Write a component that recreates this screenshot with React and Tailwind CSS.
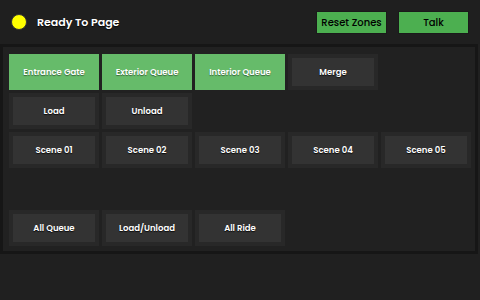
import React from "react";

const green = "bg-[#66bb6a]";

const Cell = ({ label, active }) =>
  active ? (
    <button className={`${green} flex items-center justify-center text-white text-[8.5px] font-semibold [text-shadow:0_1px_1px_rgba(0,0,0,0.45)]`}>
      {label}
    </button>
  ) : (
    <div className="bg-[#282828] p-[4px] flex">
      <button className="flex-1 bg-[#333333] flex items-center justify-center text-white text-[8.5px] font-semibold [text-shadow:0_1px_1px_rgba(0,0,0,0.8)]">
        {label}
      </button>
    </div>
  );

const App = () => {
  const rows = [
    [
      { label: "Entrance Gate", active: true },
      { label: "Exterior Queue", active: true },
      { label: "Interior Queue", active: true },
      { label: "Merge" },
      null,
    ],
    [{ label: "Load" }, { label: "Unload" }, null, null, null],
    [
      { label: "Scene 01" },
      { label: "Scene 02" },
      { label: "Scene 03" },
      { label: "Scene 04" },
      { label: "Scene 05" },
    ],
    [null, null, null, null, null],
    [{ label: "All Queue" }, { label: "Load/Unload" }, { label: "All Ride" }, null, null],
  ];

  return (
    <div
      className="w-[480px] h-[300px] bg-[#202020] overflow-hidden"
      style={{ fontFamily: "Poppins, Inter, 'Noto Sans', sans-serif" }}
    >
      <div className="h-[44px] bg-[#1f1f1f] flex items-center">
        <div className="ml-[11px] w-[16px] h-[16px] rounded-full bg-[#ffff00] border border-[#333]" />
        <span className="ml-[10px] text-white text-[11px] font-semibold [text-shadow:0_1px_1px_rgba(0,0,0,0.8)]">
          Ready To Page
        </span>
        <div className="ml-auto mr-[11px] flex gap-[11px]">
          <button className="w-[71px] h-[23px] bg-[#4caf50] border border-[#1a1a1a] text-black text-[10px] font-medium">
            Reset Zones
          </button>
          <button className="w-[71px] h-[23px] bg-[#4caf50] border border-[#1a1a1a] text-black text-[10px] font-medium">
            Talk
          </button>
        </div>
      </div>
      <div className="w-[478px] h-[210px] border-[3px] border-[#161616] bg-[#212121] pt-[7px] pl-[6px] pb-[5px]">
        <div className="grid grid-cols-[repeat(5,90px)] grid-rows-[repeat(5,36px)] gap-[3px]">
          {rows.flat().map((c, i) =>
            c ? <Cell key={i} label={c.label} active={c.active} /> : <div key={i} />
          )}
        </div>
      </div>
    </div>
  );
};

export default App;
